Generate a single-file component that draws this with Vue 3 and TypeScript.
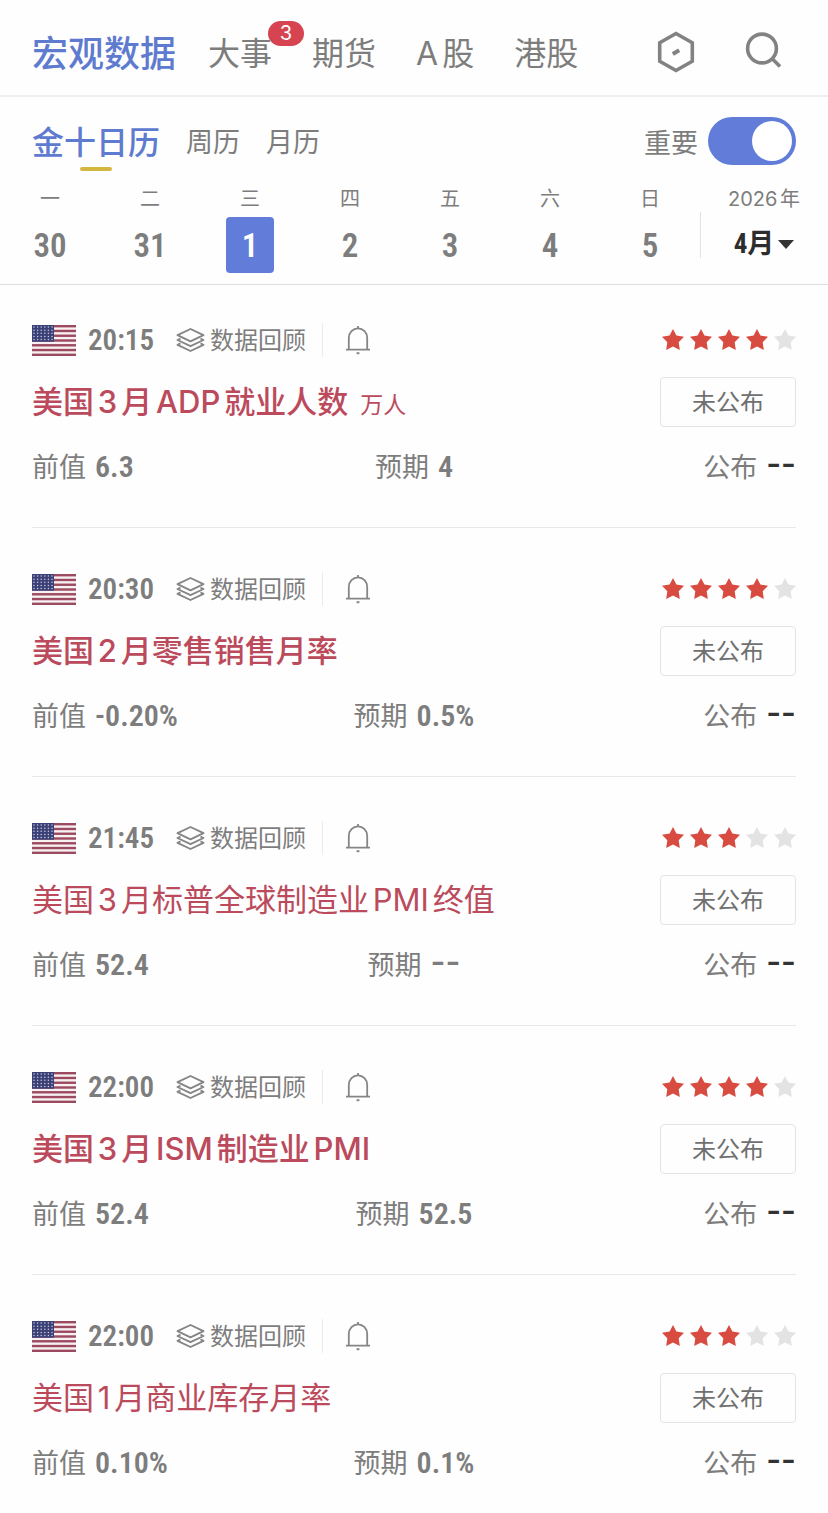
<script setup lang="ts">
import { ref } from 'vue'

interface Tab {
  label: string
  badge?: number
}

interface Day {
  week: string
  date: number
}

interface CalendarEvent {
  id: number
  time: string
  title: string
  unit?: string
  bold: boolean
  stars: number
  previous: string
  forecast: string
  actual: string
}

const tabs: Tab[] = [
  { label: '宏观数据' },
  { label: '大事', badge: 3 },
  { label: '期货' },
  { label: 'A股' },
  { label: '港股' },
]
const views = ['金十日历', '周历', '月历']
const days: Day[] = [
  { week: '一', date: 30 },
  { week: '二', date: 31 },
  { week: '三', date: 1 },
  { week: '四', date: 2 },
  { week: '五', date: 3 },
  { week: '六', date: 4 },
  { week: '日', date: 5 },
]
const events: CalendarEvent[] = [
  { id: 1, time: '20:15', title: '美国3月ADP就业人数', unit: '万人', bold: true, stars: 4, previous: '6.3', forecast: '4', actual: '--' },
  { id: 2, time: '20:30', title: '美国2月零售销售月率', bold: true, stars: 4, previous: '-0.20%', forecast: '0.5%', actual: '--' },
  { id: 3, time: '21:45', title: '美国3月标普全球制造业PMI终值', bold: false, stars: 3, previous: '52.4', forecast: '--', actual: '--' },
  { id: 4, time: '22:00', title: '美国3月ISM制造业PMI', bold: true, stars: 4, previous: '52.4', forecast: '52.5', actual: '--' },
  { id: 5, time: '22:00', title: '美国1月商业库存月率', bold: false, stars: 3, previous: '0.10%', forecast: '0.1%', actual: '--' },
]

const activeTab = ref('宏观数据')
const activeView = ref('金十日历')
const activeDate = ref(1)
const month = ref(4)
const importantOnly = ref(true)
</script>

<template>
  <div class="page">
    <header class="topbar">
      <nav class="tabs">
        <a
          v-for="tab in tabs"
          :key="tab.label"
          href="#"
          class="tab"
          :class="{ active: tab.label === activeTab }"
          @click.prevent="activeTab = tab.label"
        >{{ tab.label }}<span v-if="tab.badge" class="badge">{{ tab.badge }}</span></a>
      </nav>
      <div class="tools">
        <button type="button" class="tool" aria-label="设置">
          <svg width="40" height="42" viewBox="0 0 40 42" fill="none" stroke="#828282" stroke-width="3.6">
            <path d="M20 2.5 36.3 11.8V30.2L20 39.5 3.7 30.2V11.8Z" />
            <path d="M16.8 23 23.2 19.2" stroke-width="4" />
          </svg>
        </button>
        <button type="button" class="tool" aria-label="搜索">
          <svg width="40" height="42" viewBox="0 0 40 42" fill="none" stroke="#828282" stroke-width="3.6">
            <circle cx="18" cy="17.5" r="14.4" />
            <path d="M28 27.5 36 35.5" />
          </svg>
        </button>
      </div>
    </header>

    <section class="calendar">
      <div class="viewbar">
        <div class="views">
          <button
            v-for="view in views"
            :key="view"
            type="button"
            class="view"
            :class="{ active: view === activeView }"
            @click="activeView = view"
          >{{ view }}</button>
        </div>
        <label class="important">
          <span>重要</span>
          <input v-model="importantOnly" type="checkbox" role="switch" class="switch" />
        </label>
      </div>
      <div class="week">
        <button
          v-for="day in days"
          :key="day.date"
          type="button"
          class="day"
          :class="{ active: day.date === activeDate }"
          @click="activeDate = day.date"
        >
          <span class="weekday">{{ day.week }}</span>
          <span class="date">{{ day.date }}</span>
        </button>
        <div class="month">
          <label class="weekday" for="month">2026年</label>
          <div class="month-pick">
            <select id="month" v-model="month">
              <option v-for="m in 12" :key="m" :value="m">{{ m }}月</option>
            </select>
            <svg width="16" height="9" viewBox="0 0 16 9" fill="#333"><path d="M0 0H16L8 9Z" /></svg>
          </div>
        </div>
      </div>
    </section>

    <main class="events">
      <article v-for="event in events" :key="event.id" class="event">
        <div class="meta">
          <svg class="flag" width="44" height="31" viewBox="0 0 44 31">
            <rect width="44" height="31" fill="#f8f1f3" />
            <rect v-for="n in 7" :key="n" x="0" :y="(n - 1) * 4.77" width="44" height="2.4" fill="#9c4a5f" />
            <rect width="22" height="16.7" fill="#3b4077" />
            <template v-for="r in 5" :key="r">
              <circle v-for="c in 6" :key="c" :cx="c * 3.6 - 1.6" :cy="r * 3.1 - 1" r="0.75" fill="#c9cbe0" />
            </template>
          </svg>
          <time class="time">{{ event.time }}</time>
          <a href="#" class="review" @click.prevent>
            <svg width="30" height="26" viewBox="0 0 30 26" fill="none" stroke="#858585" stroke-width="1.9" stroke-linejoin="round">
              <path d="M14.5 2 27.5 8.2 14.5 14.4 1.5 8.2Z" />
              <path d="M4.5 11.6 1.5 13 14.5 19.2 27.5 13 24.5 11.6" />
              <path d="M4.5 16.4 1.5 17.8 14.5 24 27.5 17.8 24.5 16.4" />
            </svg>
            <span>数据回顾</span>
          </a>
          <button type="button" class="bell" aria-label="提醒">
            <svg width="24" height="30" viewBox="0 0 24 30" fill="none" stroke="#858585" stroke-width="1.8">
              <path d="M2.8 24.6V13C2.8 7.6 6.9 3.4 12 3.4S21.2 7.6 21.2 13V24.6" />
              <path d="M0 24.6H24M12 1V3.6" />
              <path d="M10.6 28.2H13.4" stroke-width="2" />
            </svg>
          </button>
          <div class="stars" role="img" :aria-label="`${event.stars} / 5`">
            <svg v-for="n in 5" :key="n" width="22" height="22" viewBox="0 0 22 22" :class="{ on: n <= event.stars }">
              <path d="M11 0 14.4 6.6 22 7.8 16.7 13.3 17.8 21 11 17.6 4.2 21 5.3 13.3 0 7.8 7.6 6.6Z" />
            </svg>
          </div>
        </div>
        <div class="headline">
          <h2 class="title" :class="{ bold: event.bold }">{{ event.title }}<small v-if="event.unit">{{ event.unit }}</small></h2>
          <button type="button" class="status">未公布</button>
        </div>
        <dl class="values">
          <div><dt>前值</dt><dd>{{ event.previous }}</dd></div>
          <div><dt>预期</dt><dd :class="{ dash: event.forecast === '--' }">{{ event.forecast }}</dd></div>
          <div class="actual"><dt>公布</dt><dd :class="{ dash: event.actual === '--' }">{{ event.actual }}</dd></div>
        </dl>
      </article>
    </main>
  </div>
</template>

<style>
body {
  margin: 0;
  background: #fefefe;
}
</style>

<style scoped>
.page {
  --sans: Inter, "Noto Sans CJK SC", sans-serif;
  --narrow: "Liberation Sans Narrow", "Roboto Condensed", Roboto, "Noto Sans CJK SC", sans-serif;
  color: #7d7d7d;
  font-family: var(--sans);
  text-autospace: normal;
}
.page * {
  box-sizing: border-box;
}
button,
select {
  margin: 0;
  padding: 0;
  border: 0;
  background: none;
  color: inherit;
  font-family: inherit;
  cursor: pointer;
}
a {
  color: inherit;
  text-decoration: none;
}
svg {
  display: block;
  flex: none;
}

.topbar {
  display: flex;
  align-items: center;
  justify-content: space-between;
  height: 97px;
  padding: 8px 44px 0 32px;
  border-bottom: 2px solid #eeeeee;
}
.tabs {
  display: flex;
  align-items: center;
  gap: 40px;
  padding-top: 4px;
}
.tab {
  position: relative;
  font-size: 32px;
  line-height: 48px;
  white-space: nowrap;
}
.tab.active {
  margin-right: -8px;
  color: #5f7bcf;
  font-size: 36px;
  font-weight: 500;
}
.badge {
  position: absolute;
  top: -9px;
  left: 60px;
  width: 36px;
  border-radius: 13px;
  background: #d54450;
  color: #fff;
  font-size: 20px;
  line-height: 25px;
  text-align: center;
}
.tools {
  display: flex;
  gap: 48px;
}

.calendar {
  border-bottom: 1px solid #dedede;
}
.viewbar {
  display: flex;
  align-items: center;
  justify-content: space-between;
  height: 88px;
  padding: 0 32px;
}
.views {
  display: flex;
  align-items: center;
  gap: 26px;
  padding-top: 4px;
}
.view {
  position: relative;
  font-size: 27px;
  line-height: 48px;
}
.view.active {
  color: #5f7bcf;
  font-size: 32px;
  font-weight: 500;
}
.view.active::after {
  content: "";
  position: absolute;
  bottom: -4px;
  left: 50%;
  width: 32px;
  height: 4px;
  margin-left: -16px;
  border-radius: 2px;
  background: #d4b73e;
}
.important {
  display: flex;
  align-items: center;
  gap: 10px;
  font-size: 27px;
}
.switch {
  appearance: none;
  width: 88px;
  height: 48px;
  margin: 0;
  padding: 4px;
  border-radius: 24px;
  background: #ccc;
  cursor: pointer;
}
.switch::before {
  content: "";
  display: block;
  width: 40px;
  height: 40px;
  border-radius: 50%;
  background: #fff;
}
.switch:checked {
  background: #617cd9;
}
.switch:checked::before {
  margin-left: auto;
}
.week {
  display: grid;
  grid-template-columns: repeat(7, 1fr) 128px;
  padding-bottom: 11px;
}
.day,
.month {
  display: flex;
  flex-direction: column;
  align-items: center;
  gap: 4px;
}
.weekday {
  font-size: 20px;
  line-height: 28px;
}
.date {
  width: 48px;
  padding-top: 2px;
  border-radius: 4px;
  font-family: var(--narrow);
  font-size: 33px;
  font-weight: 600;
  line-height: 54px;
}
.day.active .date {
  background: #617cd9;
  color: #fff;
}
.month {
  position: relative;
}
.month::before {
  content: "";
  position: absolute;
  top: 27px;
  left: 0;
  width: 1px;
  height: 46px;
  background: #e2e2e2;
}
.month-pick {
  display: flex;
  align-items: center;
  gap: 4px;
  height: 54px;
}
.month select {
  appearance: none;
  field-sizing: content;
  color: #2d2d2d;
  font-family: var(--narrow);
  font-size: 27px;
  font-weight: 700;
}

.event {
  margin: 0 32px;
  padding: 44px 0 39px;
  border-bottom: 1px solid #e8e8e8;
}
.event:first-child {
  padding-top: 38px;
}
.event:last-child {
  padding-bottom: 29px;
  border-bottom: 0;
}
.meta {
  display: flex;
  align-items: center;
  height: 34px;
}
.time {
  width: 66px;
  margin-left: 12px;
  font-family: var(--narrow);
  font-size: 29px;
  font-weight: 600;
  white-space: nowrap;
}
.review {
  display: flex;
  align-items: center;
  gap: 4px;
  margin-left: 22px;
  padding-right: 16px;
  border-right: 1px solid #ececec;
  font-size: 24px;
  line-height: 34px;
}
.review span {
  padding-top: 2px;
  line-height: 32px;
}
.bell {
  margin-left: 23px;
}
.stars {
  display: flex;
  gap: 6px;
  margin-left: auto;
}
.stars svg {
  fill: #e3e3e3;
}
.stars svg.on {
  fill: #d84b40;
}
.headline {
  display: flex;
  align-items: center;
  justify-content: space-between;
  margin-top: 20px;
}
.title {
  margin: 0;
  color: #bb4b5c;
  font-size: 31px;
  font-weight: 400;
  line-height: 48px;
}
.title.bold {
  font-weight: 500;
}
.title small {
  margin-left: 12px;
  font-size: 23px;
  font-weight: 400;
  line-height: 24px;
}
.status {
  width: 136px;
  height: 50px;
  padding-top: 2px;
  border: 1px solid #e4e4e4;
  border-radius: 4px;
  font-size: 24px;
  line-height: 44px;
  color: #707070;
}
.values {
  display: grid;
  grid-template-columns: 1fr auto 1fr;
  margin: 21px 0 0;
  font-size: 27px;
  line-height: 40px;
}
.values div {
  display: flex;
  align-items: baseline;
  gap: 9px;
  height: 40px;
}
.values dd {
  margin: 0;
  font-family: var(--narrow);
  font-size: 30px;
  font-weight: 600;
  line-height: 38px;
}
.values dd.dash {
  font-family: Inter, sans-serif;
  font-feature-settings: "case";
  font-size: 32px;
  line-height: 36px;
}
.values .actual {
  justify-content: flex-end;
}
.actual dd {
  color: #333;
}
</style>
